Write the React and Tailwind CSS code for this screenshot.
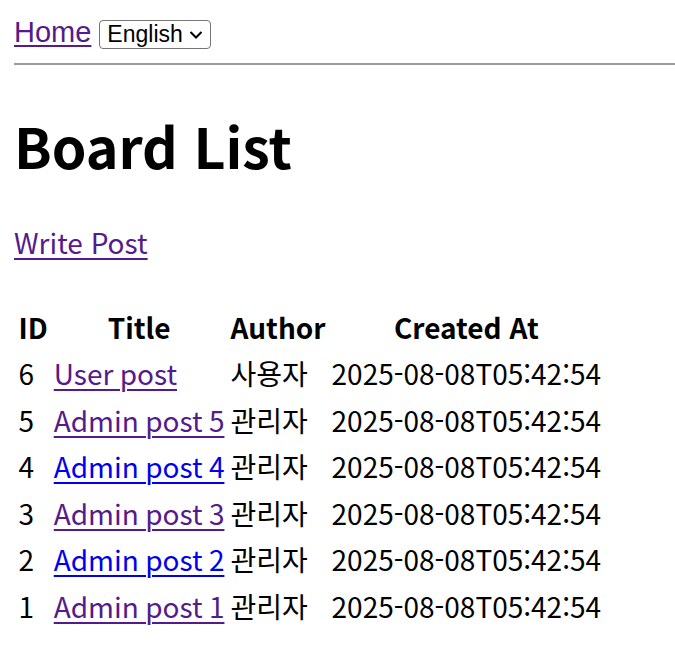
import React from 'react';

const posts = [
  { id: 6, title: 'User post', author: '사용자', visited: true },
  { id: 5, title: 'Admin post 5', author: '관리자', visited: true },
  { id: 4, title: 'Admin post 4', author: '관리자', visited: false },
  { id: 3, title: 'Admin post 3', author: '관리자', visited: true },
  { id: 2, title: 'Admin post 2', author: '관리자', visited: false },
  { id: 1, title: 'Admin post 1', author: '관리자', visited: true },
];

const cjk = "font-['Noto_Sans_CJK_KR','Noto_Sans',sans-serif]";

export default function App() {
  return (
    <div lang="ko" className={`min-h-screen bg-white text-black pl-[14px] pt-[16px] ${cjk}`}>
      <div className="flex items-baseline gap-[8px] h-[35px] font-['Liberation_Sans',Arial,sans-serif]">
        <a href="#" className="text-[29px] leading-[33px] text-[#551a8b] underline underline-offset-[3px] decoration-[2px]">
          Home
        </a>
        <div className="relative flex items-center h-[29px] w-[112px] border border-[#767676] rounded-[4px] pl-[7px] text-[23px] leading-none">
          <span>English</span>
          <svg className="absolute right-[7px] top-[9px]" width="14" height="10" viewBox="0 0 14 10" fill="none">
            <path d="M1.5 2l5.5 5.5L12.5 2" stroke="#000" strokeWidth="2" />
          </svg>
        </div>
      </div>

      <hr className="mt-[12px] border-0 border-t-2 border-[#9c9c9c]" />

      <h1 className="mt-[40px] text-[55.5px] font-bold leading-[81px]">Board List</h1>

      <p className="mt-[36px] text-[28px] leading-[40px]">
        <a href="#" className="text-[#551a8b] underline underline-offset-[4px] decoration-[2px]">Write Post</a>
      </p>

      <table className="mt-[40px] border-separate border-spacing-[3px] text-[28px] leading-[40.5px]">
        <thead>
          <tr>
            <th className="px-[1.5px] py-[1.5px] font-bold text-center">ID</th>
            <th className="px-[1.5px] py-[1.5px] font-bold text-center">Title</th>
            <th className="px-[1.5px] py-[1.5px] font-bold text-center">Author</th>
            <th className="px-[1.5px] py-[1.5px] font-bold text-center">Created At</th>
          </tr>
        </thead>
        <tbody>
          {posts.map((p) => (
            <tr key={p.id}>
              <td className="px-[1.5px] py-[1.5px]">{p.id}</td>
              <td className="px-[1.5px] py-[1.5px]">
                <a
                  href="#"
                  className={`underline underline-offset-[4px] decoration-[2px] [word-spacing:-1.5px] ${p.visited ? 'text-[#551a8b]' : 'text-[#0000ee]'}`}
                >
                  {p.title}
                </a>
              </td>
              <td className="px-[1.5px] py-[1.5px]">{p.author}</td>
              <td className="px-[1.5px] py-[1.5px]">2025-08-08T05:42:54</td>
            </tr>
          ))}
        </tbody>
      </table>
    </div>
  );
}
